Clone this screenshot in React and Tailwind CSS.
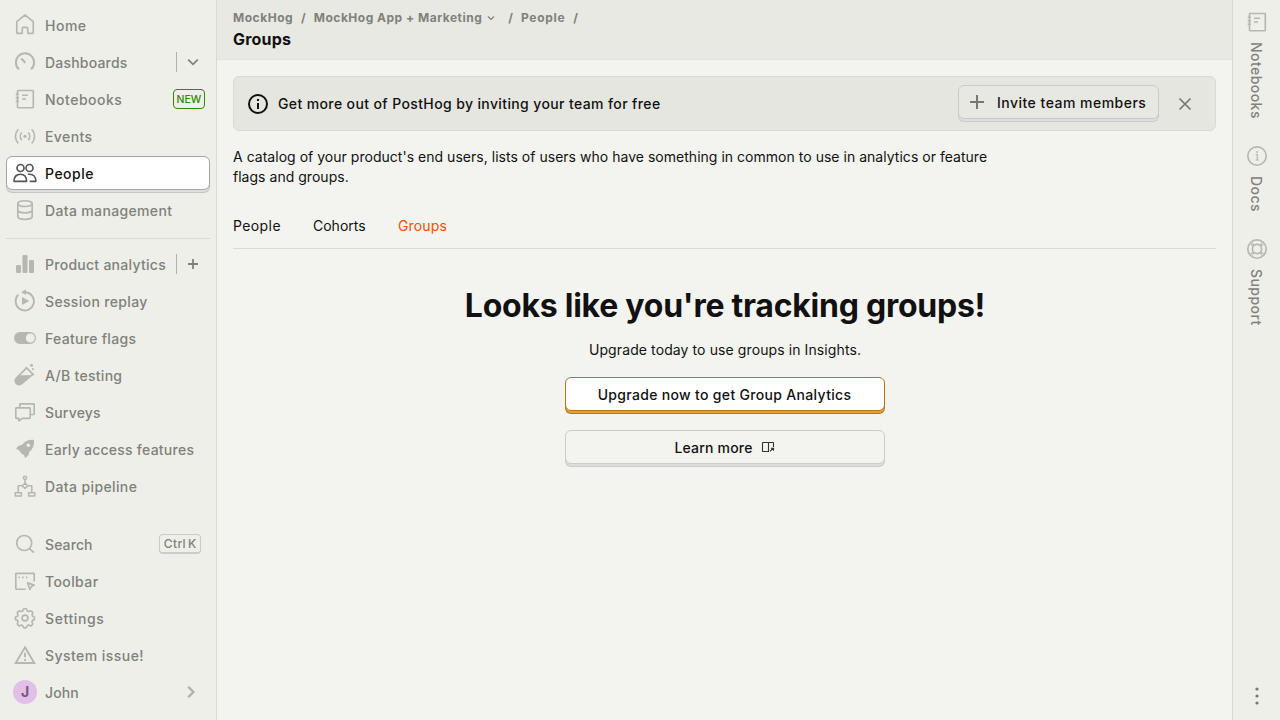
import React from "react";

const Svg = ({ children, className = "w-6 h-6", sw = 1.65 }) => (
  <svg
    viewBox="0 0 24 24"
    fill="none"
    stroke="currentColor"
    strokeWidth={sw}
    strokeLinejoin="round"
    className={className + " shrink-0"}
  >
    {children}
  </svg>
);

const solid = { fill: "currentColor", stroke: "none" };

const notebook = (
  <>
    <rect x="4.5" y="3.5" width="15.8" height="17.2" rx="0.6" />
    <path d="M2.7 7.2h3.2M2.7 10.7h3.2M2.7 14.2h3.2M9 8.2h6M9 12h4" />
  </>
);

const icons = {
  home: <path d="M3.75 8.6 12 2l8.25 6.6v11.2q0 .5-.5.5h-5v-4.9a1 1 0 0 0-1-1h-3.5a1 1 0 0 0-1 1v4.9h-5q-.5 0-.5-.5z" />,
  dashboard: (
    <>
      <path d="M6 19.3a9.1 9.1 0 1 1 12 0" strokeWidth="2" />
      <path d="m8.2 8.6 4.2 4.2" strokeWidth="2.1" />
    </>
  ),
  notebook,
  events: (
    <>
      <circle cx="12" cy="12.3" r="1.6" {...solid} />
      <path d="M8.8 8.5a5.6 5.6 0 0 0 0 7.6M15.2 8.5a5.6 5.6 0 0 1 0 7.6M5.3 5.2a10.2 10.2 0 0 0 0 14.2M18.7 5.2a10.2 10.2 0 0 1 0 14.2" />
    </>
  ),
  people: (
    <>
      <circle cx="7.5" cy="7" r="3.5" />
      <circle cx="16.5" cy="7" r="3.5" />
      <path d="M1 20.3c0-4.4 2.5-7.1 6.3-7.1s6.3 2.7 6.3 7.1zM14.8 13.3c.6-.1 1.1-.1 1.7-.1 3.8 0 6.4 2.7 6.4 7.1h-6.2" />
    </>
  ),
  database: (
    <>
      <ellipse cx="12" cy="5.6" rx="7.2" ry="2.9" />
      <path d="M4.8 5.6v12.8c0 1.6 3.2 2.9 7.2 2.9s7.2-1.3 7.2-2.9V5.6M4.8 12c0 1.6 3.2 2.9 7.2 2.9s7.2-1.3 7.2-2.9" />
    </>
  ),
  bars: (
    <g {...solid}>
      <rect x="3" y="13" width="5" height="8" rx="1.2" />
      <rect x="9.5" y="3" width="5" height="18" rx="1.2" />
      <rect x="16" y="8" width="5" height="13" rx="1.2" />
    </g>
  ),
  replay: (
    <>
      <path d="M5.4 5.8A9.1 9.1 0 1 0 12 3.2H9.5" strokeWidth="1.9" />
      <path d="M12.8.3v5.8L8.6 3.2zM9 8v8l7.3-4z" {...solid} />
    </>
  ),
  flag: (
    <path
      d="M7 6h10a6 6 0 0 1 0 12H7A6 6 0 0 1 7 6zm10.3 1.5a4.5 4.5 0 1 0 0 9 4.5 4.5 0 0 0 0-9z"
      {...solid}
      fillRule="evenodd"
    />
  ),
  flask: (
    <>
      <path d="M12.8 4.1 20.9 12.1M13.6 4.9 3.4 15.1a3.8 3.8 0 0 0 0 5.4 3.8 3.8 0 0 0 5.4 0L20 11.2" />
      <path d="M6.3 12.2h11.4l-8.4 8.6a4.1 4.1 0 0 1-6.2-.1 4.1 4.1 0 0 1 0-5.7z" {...solid} />
      <circle cx="18.5" cy="2.3" r="1.5" {...solid} />
      <circle cx="20" cy="6" r="1.1" {...solid} />
    </>
  ),
  surveys: (
    <>
      <path d="M6.8 7.8V4.5q0-.6.6-.6h13.2q.6 0 .6.6v9.4q0 .6-.6.6h-3.1" />
      <path d="M3.4 7.8h13.2q.6 0 .6.6v9.3q0 .6-.6.6H9.3l-3.4 2.5v-2.5H3.4q-.6 0-.6-.6V8.4q0-.6.6-.6z" />
    </>
  ),
  rocket: (
    <path
      d="M20.9 2.9c.5 4.3-.3 8.2-4.7 12.1-.1 2.6-1.3 4.6-4.1 5.9-.5-1.7-1-2.7-1.8-3.4-1.3-.3-3-2-3.6-3.6-.7-.7-1.8-1.4-3.7-1.9 1.4-2.6 3.3-3.9 6-4.2 3.4-4.3 7.5-5.4 11.9-4.9zm-5.6 3.6a1.8 1.8 0 1 0 0 3.6 1.8 1.8 0 0 0 0-3.6z"
      {...solid}
      fillRule="evenodd"
    />
  ),
  pipeline: (
    <g strokeWidth="1.5">
      <circle cx="12" cy="3.8" r="1.6" />
      <path d="M12 5.5v4M9.3 11.8H5.2v6.7M14.7 11.8h4.1v6.7M12 9.3l2.8 2.5-2.8 2.7-2.8-2.7z" />
      <rect x="2.2" y="18.8" width="6.2" height="3.2" />
      <rect x="15.6" y="18.8" width="6.2" height="3.2" />
    </g>
  ),
  search: (
    <>
      <circle cx="11.2" cy="11" r="7.5" />
      <path d="m16.4 16.3 4.4 4.4" />
    </>
  ),
  toolbar: (
    <>
      <path d="M12.8 20.2H3.4q-.6 0-.6-.6V5q0-.6.6-.6h17.2q.6 0 .6.6v7.6M14.6 13.9l6.6 2.2-2.9 1.5-1.4 2.9z" />
      <path d="M5.5 8.3H7M9.2 8.3h1.5M12.9 8.3h1.5" />
    </>
  ),
  settings: (
    <>
      <circle cx="12" cy="12" r="2.9" />
      <path d="M10.3 3.4q.2-.7.9-.7h1.6q.7 0 .9.7l.5 1.5 1.5.7 1.5-.7q.7-.3 1.2.2l1.1 1.1q.5.5.2 1.2l-.7 1.4.6 1.5 1.4.5q.5.2.5.9v1.3q0 .7-.6.9l-1.4.5-.6 1.5.7 1.4q.3.7-.2 1.2l-1.1 1.1q-.5.5-1.2.2l-1.4-.7-1.6.7-.5 1.5q-.2.6-.9.6h-1.5q-.6 0-.9-.6l-.5-1.5-1.5-.7-1.5.7q-.6.3-1.1-.2l-1.1-1.1q-.5-.5-.2-1.2l.7-1.4-.6-1.5-1.5-.5q-.6-.2-.6-.9v-1.4q0-.7.6-.9l1.5-.5.6-1.4-.7-1.5q-.3-.6.2-1.1l1.1-1.1q.5-.5 1.1-.2l1.5.7 1.5-.7z" />
    </>
  ),
  warning: (
    <g strokeLinejoin="miter" strokeWidth="1.9">
      <path d="M12 4.3 21.3 20H2.7z" />
      <path d="M12 9.8v4.4M12 15.9v2" />
    </g>
  ),
  info: (
    <>
      <circle cx="12" cy="12" r="9.2" />
      <path d="M12.3 10.3v6.2M10.8 10.6h1.6M10.6 16h3.2" strokeWidth="1.2" />
      <circle cx="12.1" cy="8" r="0.9" {...solid} />
    </>
  ),
  support: (
    <>
      <circle cx="12" cy="12" r="9.2" />
      <circle cx="12" cy="12" r="4.6" />
      <path d="m5.5 7 3 2.3M7 5.5l2.3 3M18.5 7l-3 2.3M17 5.5l-2.3 3M5.5 17l3-2.3M7 18.5l2.3-3M18.5 17l-3-2.3M17 18.5l-2.3-3" strokeWidth="1.2" />
    </>
  ),
};

function Item({ icon, label, active, tracking = "tracking-[0.3px]", children }) {
  return (
    <li className="h-[37px]">
      <div
        className={
          active
            ? "flex h-[34px] items-center rounded-md border border-[#a5a5a5] bg-white pl-1.5 text-[#111] shadow-[0_3px_0_-1px_#e0dde0,0_3px_0_0_#c6c6c4]"
            : "flex h-[34px] items-center pl-[7px] pr-[5px] text-[#7f817b]"
        }
      >
        <span className={active ? "text-[#555]" : "text-[#b6b7b1]"}>
          <Svg>{icons[icon]}</Svg>
        </span>
        <span className={"ml-2 whitespace-nowrap pt-px text-sm font-medium " + tracking}>{label}</span>
        {children}
      </div>
    </li>
  );
}

function SideAction({ children }) {
  return (
    <span className="ml-auto flex h-5 w-[29px] shrink-0 items-center justify-center border-l border-[#b0b1ac] pl-1 text-[#7f817b]">
      {children}
    </span>
  );
}

function RailItem({ icon, label }) {
  return (
    <div className="flex flex-col items-center">
      <Svg className="h-6 w-6 text-[#b6b7b1]">{icons[icon]}</Svg>
      <span className="mr-0.5 mt-2 text-sm font-medium leading-5 tracking-[0.45px] text-[#7f817b] [writing-mode:vertical-rl]">{label}</span>
    </div>
  );
}

export default function App() {
  return (
    <div className="flex h-screen w-screen overflow-hidden bg-[#f3f4ef] font-['Inter',sans-serif] text-sm text-[#111]">
      <nav className="flex w-[217px] shrink-0 flex-col border-r border-[#d9dad4] bg-[#eeefe9] px-1.5 pt-2">
        <ul>
          <Item icon="home" label="Home" tracking="tracking-[0.5px]" />
          <Item icon="dashboard" label="Dashboards" tracking="tracking-[0.2px]">
            <SideAction>
              <svg viewBox="0 0 12 12" className="h-3 w-3" fill="none" stroke="currentColor" strokeWidth="1.8">
                <path d="m1.2 3.7 4.8 4.6 4.8-4.6" />
              </svg>
            </SideAction>
          </Item>
          <Item icon="notebook" label="Notebooks" tracking="tracking-[0.5px]">
            <span className="ml-auto flex h-5 w-8 items-center justify-center rounded border border-[#388600] pt-px text-[10.5px] font-medium text-[#388600]">
              NEW
            </span>
          </Item>
          <Item icon="events" label="Events" tracking="tracking-[0.4px]" />
          <Item icon="people" label="People" active tracking="tracking-[0.5px]" />
          <Item icon="database" label="Data management" tracking="tracking-[0.35px]" />
        </ul>
        <div className="mt-2 mb-2 h-px shrink-0 bg-[#d9dad4]" />
        <ul>
          <Item icon="bars" label="Product analytics" tracking="tracking-[0.27px]">
            <SideAction>
              <svg viewBox="0 0 12 12" className="h-3 w-3" fill="none" stroke="currentColor" strokeWidth="1.8">
                <path d="M1 6h10M6 1v10" />
              </svg>
            </SideAction>
          </Item>
          <Item icon="replay" label="Session replay" tracking="tracking-[0.35px]" />
          <Item icon="flag" label="Feature flags" />
          <Item icon="flask" label="A/B testing" />
          <Item icon="surveys" label="Surveys" tracking="tracking-[0.2px]" />
          <Item icon="rocket" label="Early access features" tracking="tracking-[0.25px]" />
          <Item icon="pipeline" label="Data pipeline" tracking="tracking-[0.38px]" />
        </ul>
        <ul className="mt-auto pb-2">
          <Item icon="search" label="Search" tracking="tracking-[0.1px]">
            <span className="ml-auto mr-1 flex h-5 w-[42px] items-center justify-center gap-0.5 rounded border border-b-2 border-[#cbccc7] text-xs font-medium">
              <span className="tracking-[0.4px]">Ctrl</span>
              <span>K</span>
            </span>
          </Item>
          <Item icon="toolbar" label="Toolbar" tracking="tracking-[0.4px]" />
          <Item icon="settings" label="Settings" tracking="tracking-[0.6px]" />
          <Item icon="warning" label="System issue!" tracking="tracking-[0.45px]" />
          <li className="flex h-[37px] items-center pb-[3px] pl-[7px] pr-3 text-[#7f817b]">
            <span className="flex h-6 w-6 items-center justify-center rounded-full bg-[#e1bfe6] text-sm font-bold text-[#765681]">J</span>
            <span className="ml-2 pt-px font-medium tracking-[0.1px]">John</span>
            <svg viewBox="0 0 14 14" className="ml-auto h-3.5 w-3.5 text-[#b0b1ac]" fill="none" stroke="currentColor" strokeWidth="2.3">
              <path d="m4.2 1.8 5.2 5.2-5.2 5.2" />
            </svg>
          </li>
        </ul>
      </nav>

      <main className="flex min-w-0 flex-1 flex-col">
        <header className="h-[60px] shrink-0 border-b border-[#e2e3dd] bg-[#e8e9e3] px-4 pt-2.5">
          <div className="flex h-4 items-center text-xs font-bold text-[#7f817b]">
            <span className="tracking-[0.52px]">MockHog</span>
            <span className="mx-2">/</span>
            <span className="tracking-[0.5px]">MockHog App + Marketing</span>
            <svg viewBox="0 0 12 12" className="ml-[3px] h-3 w-3" fill="none" stroke="currentColor" strokeWidth="1.2">
              <path d="m3 4.5 3 3 3-3" />
            </svg>
            <span className="ml-[11px] mr-2">/</span>
            <span className="tracking-[0.7px]">People</span>
            <span className="mx-2">/</span>
          </div>
          <h1 className="mt-px text-base font-bold leading-6 tracking-[0.2px]">Groups</h1>
        </header>

        <div className="px-4 pt-4">
          <div className="flex h-[55px] items-center rounded-md border border-[#d9dad4] bg-[#e5e6e0] pl-3 pr-[22px]">
            <svg viewBox="0 0 24 24" className="h-6 w-6" fill="none" stroke="currentColor" strokeWidth="2">
              <circle cx="12" cy="12" r="9" />
              <path d="M12 11v6M12 7v2" />
            </svg>
            <span className="ml-2 font-medium tracking-[0.38px]">Get more out of PostHog by inviting your team for free</span>
            <button className="-mt-1 mb-0 ml-auto flex h-[34px] w-[201px] items-center rounded-md border border-[#cbcbca] bg-[#e8e8e3] pl-2.5 font-medium tracking-[0.48px] shadow-[0_3px_0_-1px_#e0dde0,0_3px_0_0_#cbcbca]">
              <svg viewBox="0 0 16 16" className="h-4 w-4 text-[#777873]" fill="none" stroke="currentColor" strokeWidth="2">
                <path d="M1 8h14M8 1v14" />
              </svg>
              <span className="ml-3 pt-0.5">Invite team members</span>
            </button>
            <svg viewBox="0 0 16 16" className="ml-[18px] h-4 w-4 text-[#777873]" fill="none" stroke="currentColor" strokeWidth="1.7">
              <path d="m2.5 2.5 11 11m0-11-11 11" />
            </svg>
          </div>

          <p className="mt-4 w-[768px] leading-5 tracking-[0.025px]">
            A catalog of your product's end users, lists of users who have something in common to use in analytics or feature flags and groups.
          </p>

          <div className="mt-4 flex h-[46px] items-center border-b border-[#d9dad4]">
            <span className="w-20 tracking-[0.4px]">People</span>
            <span className="w-[85px]">Cohorts</span>
            <span className="tracking-[0.15px] text-[#f54e00]">Groups</span>
          </div>

          <section className="flex flex-col items-center pt-[37px]">
            <h2 className="pl-px text-[32px] font-bold leading-10 tracking-[-0.25px]">Looks like you're tracking groups!</h2>
            <p className="mt-3.5 pl-px leading-5 tracking-[0.1px]">Upgrade today to use groups in Insights.</p>
            <button className="mt-[17px] flex h-[34px] w-80 items-center justify-center rounded-md border border-[#b17816] bg-white pt-0.5 font-medium tracking-[0.32px] shadow-[0_3px_0_-1px_#e99f2e,0_3px_0_0_#b17816]">
              Upgrade now to get Group Analytics
            </button>
            <button className="mt-[19px] flex h-[34px] w-80 items-center justify-center rounded-md border border-[#cbcbca] bg-[#f3f4ef] font-medium tracking-[0.2px] shadow-[0_3px_0_-1px_#dddddb,0_3px_0_0_#cbcbca]">
              <span className="pt-0.5">Learn more</span>
              <svg viewBox="0 0 14 14" className="ml-2 h-3.5 w-3.5 text-[#333]" fill="none" stroke="currentColor" strokeWidth="1.1">
                <path d="M8 11.5H1.8q-.3 0-.3-.3V2.8q0-.3.3-.3h10.4q.3 0 .3.3V7M7.5 2.5v9" />
                <path d="m9 11.3 3-3M9.9 8.2h2.6v2.6" />
              </svg>
            </button>
          </section>
        </div>
      </main>

      <aside className="flex w-12 shrink-0 flex-col items-center border-l border-[#d9dad4] bg-[#eeefe9] pt-2.5 pb-2">
        <div className="flex flex-col gap-[25px]">
          <RailItem icon="notebook" label="Notebooks" />
          <RailItem icon="info" label="Docs" />
          <RailItem icon="support" label="Support" />
        </div>
        <svg viewBox="0 0 20 20" className="mt-auto mb-1.5 h-5 w-5 text-[#777873]" fill="currentColor">
          <circle cx="10" cy="3" r="1.6" />
          <circle cx="10" cy="10" r="1.6" />
          <circle cx="10" cy="17" r="1.6" />
        </svg>
      </aside>
    </div>
  );
}
